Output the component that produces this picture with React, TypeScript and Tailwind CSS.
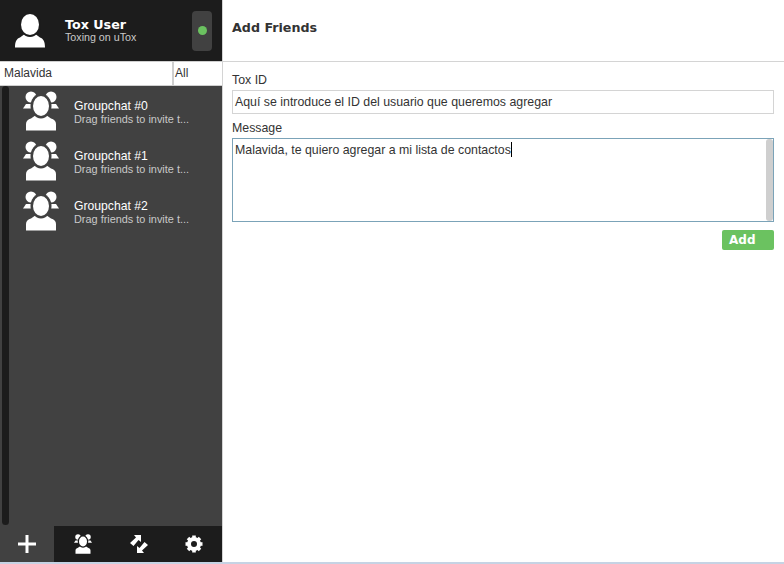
import React from 'react';

const UserIcon = () => (
  <svg width="30" height="34" viewBox="0 0 30 34" fill="#fff">
    <path d="M0 33.5 C0 27 2 24.5 5 23.5 L11 19 H19 L25 23.5 C28 24.5 30 27 30 33.5 Z" />
    <ellipse cx="15" cy="10.5" rx="11" ry="12.5" fill="#1c1c1c" />
    <ellipse cx="15" cy="10.5" rx="9" ry="10.5" />
  </svg>
);

const GroupShape = ({ bg }: { bg: string }) => (
  <>
    <circle cx="8" cy="6" r="5.5" />
    <circle cx="28" cy="6" r="5.5" />
    <path d="M0 17.5 L3 13 L8 13 V17.5 Z" />
    <path d="M36 17.5 L33 13 L28 13 V17.5 Z" />
    <path d="M3 39.5 L3 33 C3 30 5 28.5 8 27.5 L13 24 H23 L28 27.5 C31 28.5 33 30 33 33 L33 39.5 Z" />
    <ellipse cx="18" cy="15" rx="10.5" ry="12.5" fill={bg} />
    <ellipse cx="18" cy="15" rx="8" ry="10" />
  </>
);

const GroupIcon = () => (
  <svg width="36" height="40" viewBox="0 0 36 40" fill="#fff">
    <GroupShape bg="#414141" />
  </svg>
);

const SmallGroupIcon = () => (
  <svg width="18" height="20" viewBox="0 0 36 40" fill="#fff">
    <GroupShape bg="#1c1c1c" />
  </svg>
);

const TransferIcon = () => (
  <svg width="18" height="18" viewBox="0 0 18 18" fill="#fff">
    <path d="M4 0 H11 V7 L8.5 5 L3.5 11 L0 8 L6 2.5 Z" />
    <path d="M14 18 H7 V11 L9.5 13 L14.5 7 L18 10 L12 15.5 Z" />
  </svg>
);

const GearIcon = () => (
  <svg width="18" height="18" viewBox="0 0 18 18">
    <circle cx="9" cy="9" r="5" fill="none" stroke="#fff" strokeWidth="4" />
    <g stroke="#fff" strokeWidth="3.6">
      <path d="M9 0.5 V4" />
      <path d="M9 14 V17.5" />
      <path d="M0.5 9 H4" />
      <path d="M14 9 H17.5" />
      <path d="M3 3 L5.5 5.5" />
      <path d="M12.5 12.5 L15 15" />
      <path d="M15 3 L12.5 5.5" />
      <path d="M5.5 12.5 L3 15" />
    </g>
  </svg>
);

const chats = ['Groupchat #0', 'Groupchat #1', 'Groupchat #2'];

export default function App() {
  return (
    <div className="w-[784px] h-[564px] overflow-hidden flex flex-col bg-white font-['Liberation_Sans',Arial,sans-serif]">
      <div className="flex flex-1 min-h-0">
        {/* Sidebar */}
        <div className="w-[222px] flex flex-col border-r border-[#d4d4d4] box-content">
          <div className="h-[61px] bg-[#1c1c1c] flex items-center">
            <div className="w-[60px] flex justify-center pt-[1px]">
              <UserIcon />
            </div>
            <div className="ml-[5px] flex-1 pb-[2px]">
              <div className="font-['DejaVu_Sans',sans-serif] font-bold text-[12.7px] leading-[15px] text-white">Tox User</div>
              <div className="text-[10.7px] leading-[11px] text-[#c9c9c9]">Toxing on uTox</div>
            </div>
            <div className="w-[20px] h-[40px] mr-[10px] rounded-[4px] bg-[#414141] flex items-center justify-center">
              <div className="w-[9px] h-[9px] rounded-full bg-[#6bc260]" />
            </div>
          </div>

          <div className="h-[25px] flex bg-white border-y border-[#cfcfcf] text-[12px] text-[#333]">
            <div className="flex-1 pl-[4px] leading-[22px]">Malavida</div>
            <div className="w-[50px] pl-[1px] border-l-2 border-[#cfcfcf] leading-[22px]">All</div>
          </div>

          <div className="flex-1 min-h-0 bg-[#414141] flex">
            <div className="w-[10px] pl-[2px] pr-[1px] pb-[1px]">
              <div className="h-full rounded-full bg-[#1c1c1c]" />
            </div>
            <div className="flex-1 pl-[13px]">
              {chats.map((name) => (
                <div key={name} className="h-[50px] flex items-center">
                  <GroupIcon />
                  <div className="ml-[15px] pt-[4px]">
                    <div className="text-[12.2px] leading-[13px] text-white">{name}</div>
                    <div className="text-[10.9px] leading-[13px] text-[#c9c9c9]">Drag friends to invite t...</div>
                  </div>
                </div>
              ))}
            </div>
          </div>

          <div className="h-[36px] flex bg-[#1c1c1c]">
            <div className="w-[54px] bg-[#414141] flex items-center justify-center">
              <svg width="18" height="18" viewBox="0 0 18 18" fill="#fff">
                <path d="M7.5 0 H10.5 V7.5 H18 V10.5 H10.5 V18 H7.5 V10.5 H0 V7.5 H7.5 Z" />
              </svg>
            </div>
            <div className="w-[58px] flex items-center justify-center"><SmallGroupIcon /></div>
            <div className="w-[54px] flex items-center justify-center"><TransferIcon /></div>
            <div className="w-[56px] flex items-center justify-center"><GearIcon /></div>
          </div>
        </div>

        {/* Add friends */}
        <div className="flex-1 flex flex-col">
          <div className="h-[62px] border-b border-[#d4d4d4] pl-[9px] flex items-center">
            <span className="font-['DejaVu_Sans',sans-serif] font-bold text-[12.7px] text-[#333] pb-[5px]">Add Friends</span>
          </div>
          <div className="pl-[9px] pr-[10px] pt-[11px] text-[12.35px] text-[#333]">
            <div className="leading-[15px]">Tox ID</div>
            <div className="mt-[2px] h-[24px] border border-[#d4d4d4] pl-[2px] leading-[22px]">
              Aquí se introduce el ID del usuario que queremos agregar
            </div>
            <div className="mt-[7px] leading-[15px]">Message</div>
            <div className="mt-[2px] h-[84px] border border-[#7ba3b8] flex">
              <div className="flex-1 pl-[2px] pt-[2px] leading-[18px]">
                Malavida, te quiero agregar a mi lista de contactos
                <span className="inline-block w-[1px] h-[15px] bg-black align-text-bottom" />
              </div>
              <div className="w-[7px] bg-[#cfcfcf] rounded-[3px]" />
            </div>
            <div className="mt-[8px] flex justify-end">
              <div className="w-[52px] h-[20px] rounded-[2px] bg-[#6bc260] pl-[7px] font-['DejaVu_Sans',sans-serif] font-bold text-[12px] leading-[20px] text-white">
                Add
              </div>
            </div>
          </div>
        </div>
      </div>
      <div className="h-[2px] bg-[#c6d3e4]" />
    </div>
  );
}
